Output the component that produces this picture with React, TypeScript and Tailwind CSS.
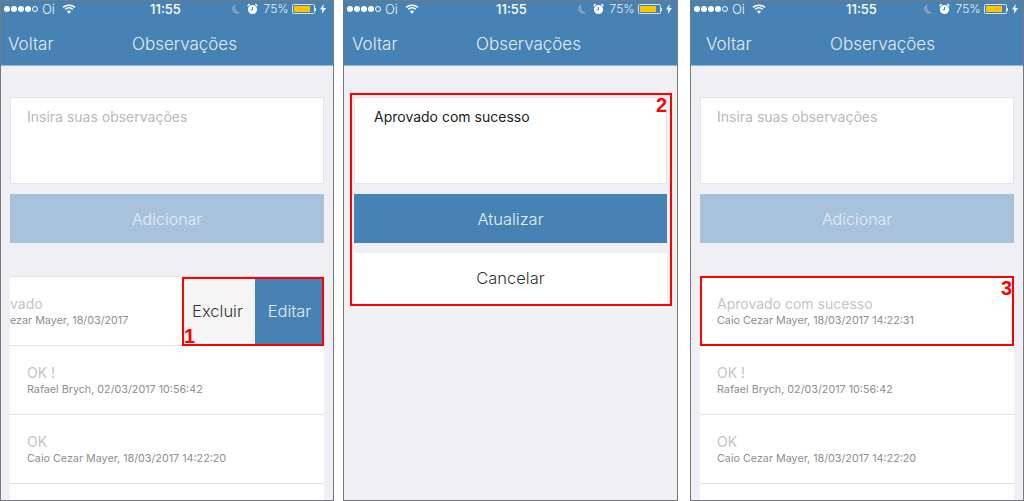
import React from 'react';

const font = "font-['Inter','Liberation_Sans',sans-serif]";

function StatusBar({ clockOffset, rightPad }: { clockOffset: string; rightPad: string }) {
  return (
    <div className={`flex h-[16px] items-center pl-[3px] text-white ${rightPad}`}>
      <div className={`flex items-center ${clockOffset}`}>
        <div className="flex gap-[1px]">
          {[0, 1, 2, 3].map((i) => (
            <span key={i} className="h-[6px] w-[6px] rounded-full bg-white" />
          ))}
          <span className="h-[6px] w-[6px] rounded-full border border-white" />
        </div>
        <span className="ml-[4px] text-[13px] font-light leading-none opacity-90">Oi</span>
        <svg className="ml-[7px]" width="14" height="10" viewBox="0 0 14 10" fill="none" stroke="white">
          <path d="M1 3.4C4.4 .4 9.6 .4 13 3.4" strokeWidth="1.5" />
          <path d="M3.2 5.4C5.4 3.6 8.6 3.6 10.8 5.4" strokeWidth="1.5" />
          <path d="M5.3 7.4C6.3 6.6 7.7 6.6 8.7 7.4L7 9.4Z" fill="white" strokeWidth=".6" />
        </svg>
      </div>
      <span className="w-[33px] whitespace-nowrap text-center text-[13px] font-medium leading-none">11:55</span>
      <div className="ml-auto flex items-center">
        <svg width="11" height="12" viewBox="0 0 11 12">
          <path d="M6 1A5 5 0 1 0 10.5 9.5A5.6 5.6 0 0 1 6 1Z" fill="#7d9fc4" />
        </svg>
        <svg className="ml-[6px]" width="11" height="12" viewBox="0 0 11 12">
          <circle cx="5.5" cy="6.5" r="4.6" fill="white" />
          <path d="M5.5 4V6.8H3.6" stroke="#4682b4" strokeWidth="1" fill="none" />
          <path d="M.6 3L2.6 1M10.4 3L8.4 1" stroke="white" strokeWidth="1.4" />
        </svg>
        <span className="ml-[6px] text-[12px] font-light leading-none opacity-90">75%</span>
        <div className="ml-[3px] flex items-center">
          <div className="h-[10px] w-[23px] rounded-[1.5px] border border-white/80 p-[1px]">
            <div className="h-full w-[16px] bg-[#fdc500]" />
          </div>
          <span className="h-[3px] w-[1.5px] bg-white/80" />
        </div>
        <svg className="ml-[4px]" width="6" height="10" viewBox="0 0 6 10">
          <path d="M3.8 0L0 5.6H2.5L1.8 10L6 4H3.2Z" fill="white" />
        </svg>
      </div>
    </div>
  );
}

function NavBar({ backOffset }: { backOffset: string }) {
  return (
    <div className="flex h-[49px] items-start border-b border-[#8fb6e0] pt-[17px] text-[17px] font-light leading-5 text-[#e3ecf4]">
      <span className={backOffset}>Voltar</span>
      <span>Observações</span>
    </div>
  );
}

type PhoneProps = {
  className: string;
  clockOffset: string;
  rightPad: string;
  backOffset: string;
  children: React.ReactNode;
};

function Phone({ className, clockOffset, rightPad, backOffset, children }: PhoneProps) {
  return (
    <div className={`relative h-[501px] overflow-hidden border border-[#77797c] bg-[#efeff4] ${className}`}>
      <div className="bg-[#4682b4]">
        <StatusBar clockOffset={clockOffset} rightPad={rightPad} />
        <NavBar backOffset={backOffset} />
      </div>
      {children}
    </div>
  );
}

function InputBox({ text, dark }: { text: string; dark?: boolean }) {
  return (
    <div className={`h-[87px] border border-[#e4e4e6] bg-white pt-[10px] text-[14px] leading-[17px] ${dark ? 'pl-[19px] text-[#222]' : 'pl-[16px] text-[#b9b9bc]'}`}>
      {text}
    </div>
  );
}

function Row({ title, meta }: { title: string; meta: string }) {
  return (
    <div className="flex h-[69px] flex-col border-b border-[#e2e2e4] bg-white pl-[17px] pt-[18px]">
      <span className="text-[14px] leading-[17px] text-[#c4c4c6]">{title}</span>
      <span className="mt-[2px] text-[10.75px] leading-[14px] text-[#8e8e90]">{meta}</span>
    </div>
  );
}

function SwipedRow() {
  return (
    <div className="flex h-[69px] border-b border-[#e2e2e4] bg-white">
      <div className="flex w-[172px] flex-col pt-[18px]">
        <span className="text-[14px] leading-[17px] text-[#c4c4c6]">vado</span>
        <span className="mt-[2px] text-[10.75px] leading-[14px] text-[#8e8e90]">ezar Mayer, 18/03/2017</span>
      </div>
      <div className="flex w-[73px] items-center justify-center bg-[#f5f5f5] pr-[2px] text-[16.5px] font-light text-[#333]">Excluir</div>
      <div className="flex flex-1 items-center justify-center bg-[#4682b4] text-[16.5px] font-light text-[#e3ecf4]">Editar</div>
    </div>
  );
}

function Mark({ n, className }: { n: string; className: string }) {
  return (
    <span className={`absolute font-['Liberation_Sans',sans-serif] text-[20px] font-bold leading-none text-[#f00] ${className}`}>{n}</span>
  );
}

function ListScreen({ first }: { first: React.ReactNode }) {
  return (
    <div className="mx-[9px] mt-[31px]">
      <InputBox text="Insira suas observações" />
      <div className="mt-[10px] flex h-[49px] items-center justify-center bg-[#a9c2dc] text-[16px] font-light text-[#e3ecf4]">
        Adicionar
      </div>
      <div className="mt-[33px] border-t border-[#e2e2e4]">
        {first}
        <Row title="OK !" meta="Rafael Brych, 02/03/2017 10:56:42" />
        <Row title="OK" meta="Caio Cezar Mayer, 18/03/2017 14:22:20" />
        <div className="h-[40px] bg-white" />
      </div>
    </div>
  );
}

export default function App() {
  return (
    <div className={`flex h-[501px] w-[1024px] overflow-hidden bg-white ${font}`}>
      <Phone className="w-[334px]" clockOffset="w-[145px]" rightPad="pr-[7px]" backOffset="w-[131px] pl-[7px]">
        <ListScreen first={<SwipedRow />} />
        {/* annotation 1 */}
        <div className="absolute left-[181px] top-[276px] h-[69px] w-[142px] border-2 border-[#f00]" />
        <Mark n="1" className="left-[183px] top-[325px]" />
      </Phone>

      <Phone className="ml-[9px] w-[335px]" clockOffset="w-[148px]" rightPad="pr-[5px]" backOffset="w-[132px] pl-[8px]">
        <div className="mx-[10px] mt-[31px]">
          <InputBox text="Aprovado com sucesso" dark />
          <div className="mt-[10px] flex h-[49px] items-center justify-center bg-[#4682b4] pt-[2px] text-[16.5px] font-light text-[#e8eff5]">
            Atualizar
          </div>
          <div className="mt-[10px] flex h-[51px] items-center justify-center bg-white text-[16.5px] font-light text-[#333]">
            Cancelar
          </div>
        </div>
        {/* annotation 2 */}
        <div className="absolute left-[6px] top-[92px] h-[213px] w-[322px] border-2 border-[#f00]" />
        <Mark n="2" className="left-[312px] top-[94px]" />
      </Phone>

      <Phone className="ml-[12px] w-[334px]" clockOffset="w-[151px]" rightPad="pr-[5px]" backOffset="w-[139px] pl-[15px]">
        <ListScreen first={<Row title="Aprovado com sucesso" meta="Caio Cezar Mayer, 18/03/2017 14:22:31" />} />
        {/* annotation 3 */}
        <div className="absolute left-[9px] top-[275px] h-[70px] w-[314px] border-2 border-[#f00]" />
        <Mark n="3" className="left-[310px] top-[277px]" />
      </Phone>
    </div>
  );
}
